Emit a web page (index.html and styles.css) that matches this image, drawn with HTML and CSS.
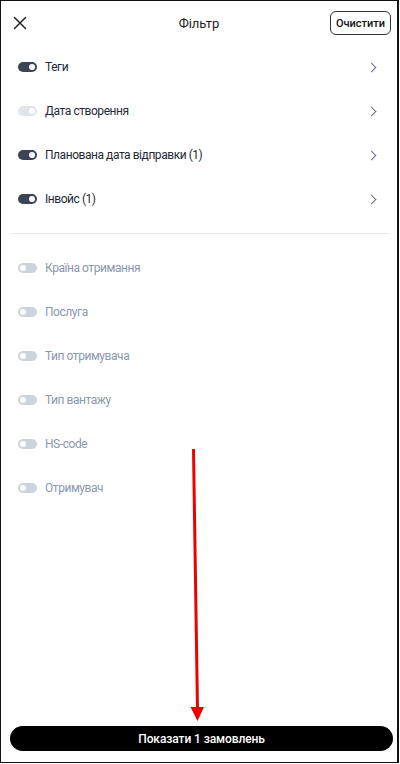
FILE: index.html
```html
<!DOCTYPE html>
<html lang="uk">
<head>
<meta charset="utf-8">
<title>Фільтр</title>
<link rel="stylesheet" href="styles.css">
</head>
<body>
<div class="frame">
  <header class="header">
    <button class="icon-btn close" aria-label="Закрити">
      <svg width="14" height="14" viewBox="0 0 14 14"><path d="M1.5 1.5 L12.5 12.5 M12.5 1.5 L1.5 12.5" stroke="#222" stroke-width="1.5" fill="none" stroke-linecap="round"/></svg>
    </button>
    <h1 class="title">Фільтр</h1>
    <button class="clear-btn">Очистити</button>
  </header>

  <ul class="list">
    <li class="row"><span class="toggle on"></span><span class="label">Теги</span><span class="chev"></span></li>
    <li class="row"><span class="toggle faint"></span><span class="label">Дата створення</span><span class="chev"></span></li>
    <li class="row"><span class="toggle on"></span><span class="label">Планована дата відправки (1)</span><span class="chev"></span></li>
    <li class="row"><span class="toggle on"></span><span class="label">Інвойс (1)</span><span class="chev"></span></li>
  </ul>

  <hr class="divider">

  <ul class="list muted">
    <li class="row"><span class="toggle off"></span><span class="label">Країна отримання</span></li>
    <li class="row"><span class="toggle off"></span><span class="label">Послуга</span></li>
    <li class="row"><span class="toggle off"></span><span class="label">Тип отримувача</span></li>
    <li class="row"><span class="toggle off"></span><span class="label">Тип вантажу</span></li>
    <li class="row"><span class="toggle off"></span><span class="label">HS-code</span></li>
    <li class="row"><span class="toggle off"></span><span class="label">Отримувач</span></li>
  </ul>

  <div class="spacer"></div>

  <button class="show-btn">Показати 1 замовлень</button>

  <svg class="arrow" width="400" height="764" viewBox="0 0 400 764">
    <line x1="193.5" y1="449" x2="197.5" y2="710" stroke="#ee0000" stroke-width="3"/>
    <polygon points="190.5,707 204,707 197.5,721" fill="#ee0000"/>
  </svg>
</div>
</body>
</html>
```

FILE: styles.css
```css
* { box-sizing: border-box; }
html, body { margin: 0; padding: 0; background: #fff; }
body {
  font-family: Roboto, "Noto Sans", "Liberation Sans", sans-serif;
  color: #1f2937;
}
.frame {
  position: relative;
  width: 399px;
  height: 763px;
  border: 1px solid #111;
  border-right-width: 2px;
  display: flex;
  flex-direction: column;
}
.header {
  height: 44px;
  display: flex;
  align-items: center;
  justify-content: space-between;
  padding: 0 6px 0 12px;
  position: relative;
}
.icon-btn {
  border: 0;
  background: none;
  padding: 0;
  width: 14px;
  height: 14px;
  display: flex;
}
.title {
  position: absolute;
  left: 0; right: 0;
  text-align: center;
  margin: 0;
  font-size: 13px;
  font-weight: 400;
  letter-spacing: -0.1px;
  color: #222;
  pointer-events: none;
}
.clear-btn {
  position: relative;
  height: 24px;
  width: 61px;
  border: 1px solid #333;
  border-radius: 6px;
  background: #fff;
  font-family: Roboto, "Liberation Sans", sans-serif;
  font-size: 11px;
  font-weight: 500;
  color: #111;
  padding: 0;
}
.list {
  list-style: none;
  margin: 0;
  padding: 0;
}
.row {
  height: 44px;
  display: flex;
  align-items: center;
  padding: 0 20px 0 17px;
  font-size: 12px;
  letter-spacing: -0.45px;
  color: #1f2937;
}
.toggle {
  position: relative;
  width: 19px;
  height: 10px;
  border-radius: 5px;
  background: #3b4556;
  flex: none;
  margin-right: 8px;
}
.toggle::after {
  content: "";
  position: absolute;
  top: 2px;
  width: 6px;
  height: 6px;
  border-radius: 50%;
  background: #fff;
}
.toggle.on::after, .toggle.faint::after { right: 2px; }
.toggle.faint { background: #e1e5ea; }
.toggle.off { background: #cdd3dc; }
.toggle.off::after { left: 2px; }
.label { flex: 1; }
.chev {
  width: 7px;
  height: 7px;
  border-right: 1.2px solid #667085;
  border-top: 1.2px solid #667085;
  transform: rotate(45deg);
  margin-right: 2px;
}
.muted .row { color: #8a98b0; }
.divider {
  margin: 12px 8px 12px 9px;
  border: 0;
  border-top: 1px solid #e6e8eb;
  height: 0;
}
.spacer { flex: 1; }
.show-btn {
  margin: 0 4px 11px 9px;
  height: 25px;
  border: 0;
  border-radius: 13px;
  background: #000;
  color: #fff;
  font-family: Roboto, "Liberation Sans", sans-serif;
  font-size: 12px;
  font-weight: 500;
  letter-spacing: -0.1px;
}
.arrow {
  position: absolute;
  left: -1px;
  top: -1px;
  pointer-events: none;
}
```
